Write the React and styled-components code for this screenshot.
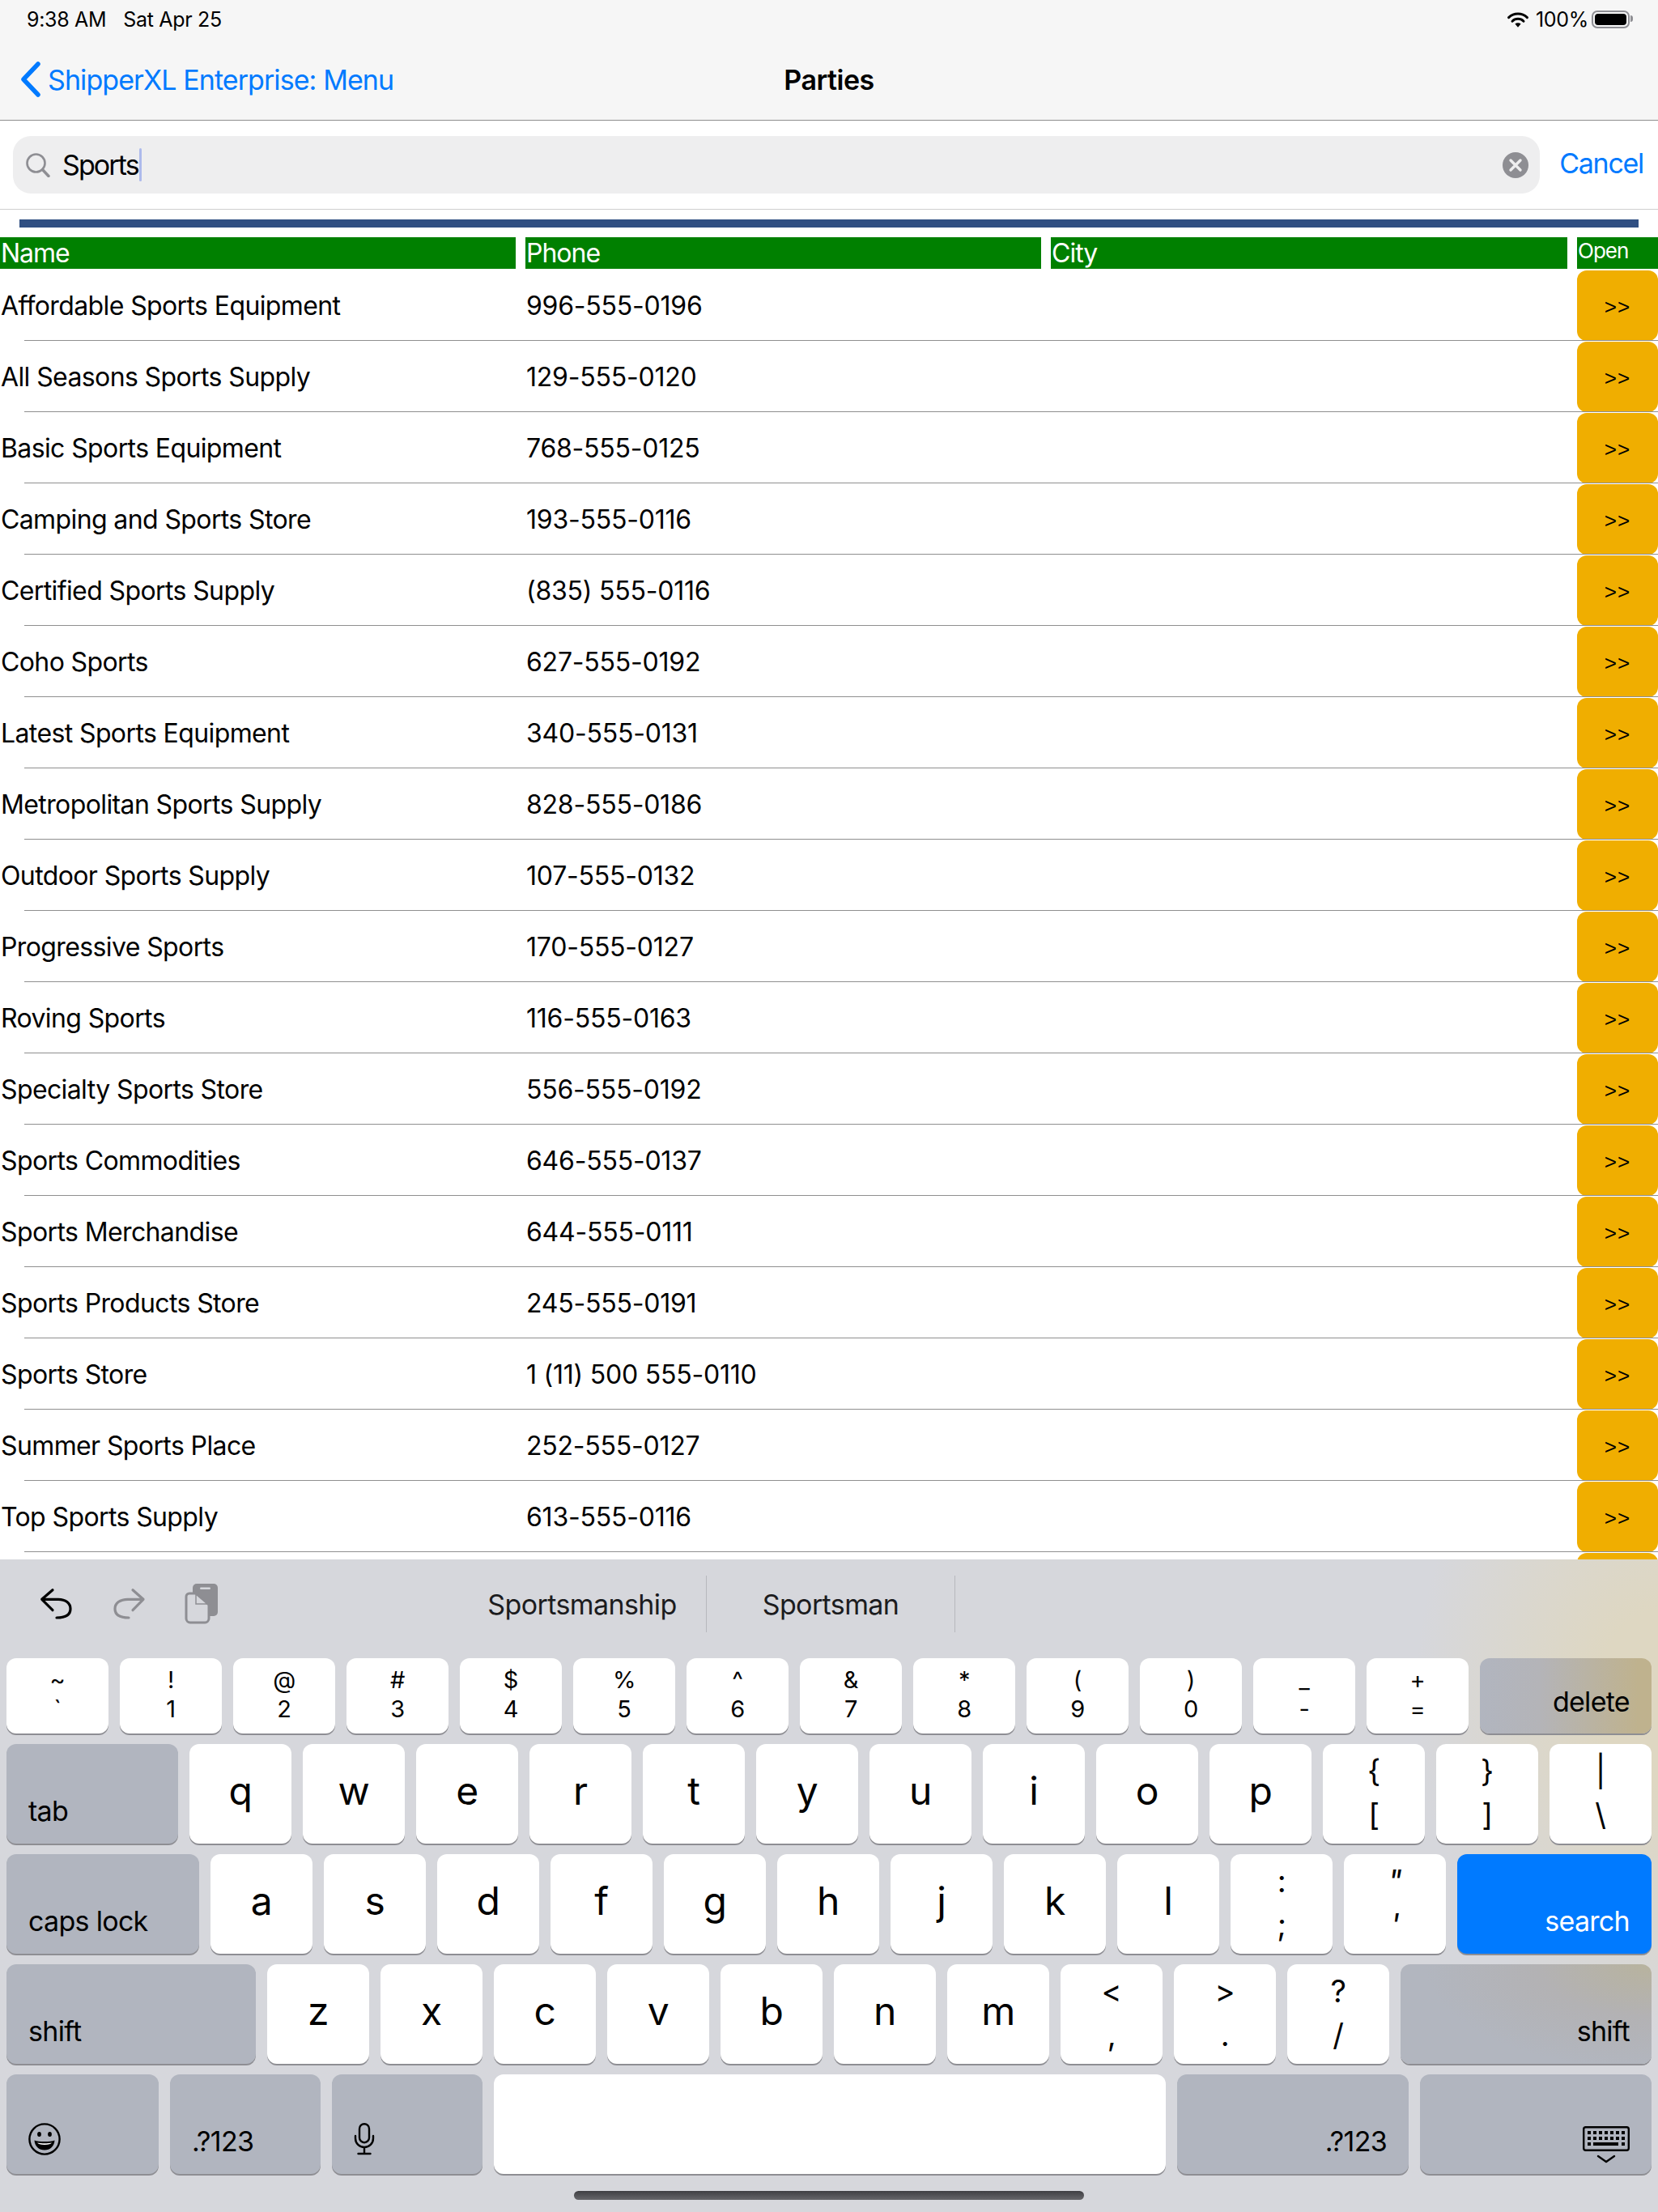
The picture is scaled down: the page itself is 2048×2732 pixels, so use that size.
import styled, { createGlobalStyle } from 'styled-components';

const GlobalStyle = createGlobalStyle`
    html, body {
        margin: 0;
        padding: 0;
        background: #fff;
    }
    body {
        font-family: Inter, Roboto, "Liberation Sans", sans-serif;
        letter-spacing: -0.32px;
        color: #000;
    }
`;

const Screen = styled.div`
    width: 2048px;
    height: 2732px;
    display: flex;
    flex-direction: column;
    overflow: hidden;
`;

// Top bar
const TopBar = styled.header`
    height: 148px;
    flex: none;
    background: #f6f6f6;
    border-bottom: 1px solid #8f8f8f;
    box-sizing: content-box;
`;

const StatusBar = styled.div`
    height: 48px;
    padding: 0 31px 0 33px;
    display: flex;
    align-items: center;
    justify-content: space-between;
    font-size: 25px;
`;

const StatusLeft = styled.div`
    display: flex;
    gap: 21px;
`;

const StatusRight = styled.div`
    display: flex;
    align-items: center;
    gap: 9px;
`;

const Battery = styled.div`
    position: relative;
    width: 47px;
    height: 22px;
    box-sizing: border-box;
    border: 2px solid #8e8e93;
    border-radius: 7px;
    padding: 2px;
    margin-left: -5px;
    margin-right: 4px;
    display: flex;

    &::before {
        content: '';
        flex: 1;
        background: #000;
        border-radius: 4px;
    }

    &::after {
        content: '';
        position: absolute;
        right: -6px;
        top: 4px;
        width: 3px;
        height: 8px;
        border-radius: 0 3px 3px 0;
        background: #8e8e93;
    }
`;

const NavBar = styled.nav`
    height: 100px;
    display: grid;
    grid-template-columns: 1fr auto 1fr;
    align-items: center;
    font-size: 34px;
`;

const BackLink = styled.div`
    display: flex;
    align-items: center;
    gap: 8px;
    padding-left: 25px;
    color: #007aff;
    letter-spacing: -0.92px;
`;

const NavTitle = styled.div`
    font-weight: 600;
    letter-spacing: -0.5px;
`;

// Search
const SearchRow = styled.div`
    height: 110px;
    flex: none;
    box-sizing: border-box;
    border-bottom: 1px solid #cfcfcf;
    padding: 19px 18px 20px 16px;
    display: flex;
    align-items: flex-start;
    gap: 24px;
`;

const SearchField = styled.div`
    flex: 1;
    height: 71px;
    background: #eeeeef;
    border-radius: 22px;
    display: flex;
    align-items: center;
    padding: 0 14px 0 16px;
    gap: 15px;
    font-size: 34px;
`;

const SearchText = styled.span`
    flex: 1;
    display: flex;
    align-items: center;
    letter-spacing: -1.9px;
`;

const Caret = styled.span`
    display: inline-block;
    width: 3px;
    height: 41px;
    margin-left: 1px;
    background: #adbaec;
    border-radius: 2px;
`;

const CancelButton = styled.div`
    color: #007aff;
    font-size: 34px;
    line-height: 68px;
    letter-spacing: -1.3px;
`;

const Divider = styled.div`
    height: 10px;
    flex: none;
    margin: 12px 24px;
    background: #304f82;
`;

// Table
const columns = '637px 637px 638px 100px';

const HeaderRow = styled.div`
    display: grid;
    grid-template-columns: ${columns};
    column-gap: 12px;
    flex: none;
`;

const HeaderCell = styled.div`
    height: 39px;
    background: #008000;
    color: #fff;
    font-size: ${p => (p.$small ? '26px' : '32px')};
    line-height: ${p => (p.$small ? '34px' : '40px')};
    letter-spacing: -1px;
    padding-left: 1px;
    white-space: nowrap;
`;

const RowList = styled.div`
    flex: 1;
    min-height: 0;
    overflow: hidden;
    padding-top: 1px;
`;

const Row = styled.div`
    position: relative;
    height: 88px;
    display: grid;
    grid-template-columns: ${columns};
    column-gap: 12px;
    align-items: center;
    font-size: 32px;

    &::after {
        content: '';
        position: absolute;
        left: 30px;
        right: 0;
        bottom: 0;
        height: 1px;
        background: #8f8f8f;
    }
`;

const NameCell = styled.div`
    padding-left: 1px;
    white-space: nowrap;
    letter-spacing: -0.61px;
`;

const PhoneCell = styled.div`
    padding-left: 1px;
    white-space: nowrap;
    letter-spacing: -0.22px;
`;

const OpenButton = styled.div`
    grid-column: 4;
    height: 87px;
    margin-top: 1px;
    padding-top: 3px;
    box-sizing: border-box;
    background: #f0ae00;
    border-radius: 12px;
    display: flex;
    align-items: center;
    justify-content: center;
    font-family: "Liberation Sans", sans-serif;
    font-size: 26px;
    letter-spacing: 1px;
`;

// Keyboard
const Keyboard = styled.div`
    height: 806px;
    flex: none;
    box-sizing: border-box;
    background:
        radial-gradient(ellipse 300px 420px at 100% 170px, #ded7c2 0%, #ded7c2 25%, rgba(214, 215, 220, 0) 100%),
        #d6d7dc;
    display: flex;
    flex-direction: column;
    padding: 0 8px;
`;

const Suggestions = styled.div`
    height: 122px;
    flex: none;
    display: flex;
    align-items: center;
    padding: 0 0 12px 40px;
    box-sizing: border-box;
`;

const ToolIcons = styled.div`
    display: flex;
    align-items: center;
    gap: 48px;
    width: 518px;
`;

const ToolIcon = styled.svg`
    display: block;
`;

const Suggestion = styled.div`
    width: 306px;
    height: 70px;
    display: flex;
    align-items: center;
    justify-content: center;
    border-right: 1px solid #b7b8bd;
    font-size: 34px;
    letter-spacing: -0.6px;
    color: #1c1c1e;
`;

const KeyRows = styled.div`
    display: flex;
    flex-direction: column;
    gap: 13px;
`;

const KeyRow = styled.div`
    display: flex;
    gap: 14px;
    height: ${p => p.$height}px;
`;

const keyTones = {
    light: 'background: #fff;',
    dark: 'background: #b1b5bf;',
    blue: 'background: #007aff; color: #fff;',
    delete: 'background: linear-gradient(90deg, #b1b5bf 0%, #b4b4b8 35%, #bfb28e 92%);',
    shift: 'background: radial-gradient(ellipse 280px 130px at 100% 0%, #b8b39e 0%, #b3b2b4 50%, #b2b6bf 100%);',
};

const Key = styled.div`
    flex: none;
    width: ${p => p.$w}px;
    box-sizing: border-box;
    border-radius: 12px;
    box-shadow: 0 2px 0 #8e8e93;
    ${p => keyTones[p.$tone || 'light']}
    display: flex;
`;

const LetterKey = styled(Key)`
    align-items: center;
    justify-content: center;
    font-size: 48px;
    padding-bottom: 8px;
`;

const SymbolKey = styled(Key)`
    flex-direction: column;
    align-items: center;
    justify-content: center;
    font-size: ${p => (p.$big ? '38px' : '29px')};
    line-height: ${p => (p.$big ? '54px' : '36px')};
    font-style: ${p => (p.$slanted ? 'italic' : 'normal')};
    padding-bottom: 4px;
`;

const ActionKey = styled(Key)`
    align-items: flex-end;
    justify-content: ${p => (p.$right ? 'flex-end' : 'flex-start')};
    padding: 0 27px ${p => p.$pad ?? 20}px 27px;
    font-size: 34px;
    line-height: 40px;
    letter-spacing: -0.7px;
`;

const BottomIcon = styled.svg`
    display: block;
`;

const ChevronBack = () => (
    <svg width="26" height="44" viewBox="0 0 26 44">
        <path d="M22 3 L4 22 L22 41" fill="none" stroke="#007aff" strokeWidth="5.5" strokeLinecap="round" strokeLinejoin="round" />
    </svg>
);

const Wifi = () => (
    <svg width="26" height="19" viewBox="0 0 26 19">
        <path d="M1.6 6.6 A16.5 16.5 0 0 1 24.4 6.6" fill="none" stroke="#000" strokeWidth="3" strokeLinecap="round" />
        <path d="M6 11.2 A10 10 0 0 1 20 11.2" fill="none" stroke="#000" strokeWidth="3" strokeLinecap="round" />
        <path d="M9.4 14.6 A5.2 5.2 0 0 1 16.6 14.6 L13 18.8 Z" fill="#000" />
    </svg>
);

const SearchIcon = () => (
    <svg width="30" height="30" viewBox="0 0 30 30">
        <circle cx="12.5" cy="12.5" r="11" fill="none" stroke="#8e8e93" strokeWidth="2.6" />
        <path d="M20.5 20.5 L28 28.5" stroke="#8e8e93" strokeWidth="3.4" strokeLinecap="round" />
    </svg>
);

const ClearIcon = () => (
    <svg width="32" height="32" viewBox="0 0 32 32">
        <circle cx="16" cy="16" r="16" fill="#8e8e93" />
        <path d="M10 10 L22 22 M22 10 L10 22" stroke="#eeeeef" strokeWidth="3.4" strokeLinecap="round" />
    </svg>
);

const Undo = () => (
    <ToolIcon width="42" height="42" viewBox="18 18 42 42">
        <path d="M35 21.7 L21.7 33.3 L35 46.7 M22 33.3 H42 C51 33.3 57 38 57 45 C57 52 51 56 40 56" fill="none" stroke="#000" strokeWidth="3.2" strokeLinecap="round" strokeLinejoin="round" />
    </ToolIcon>
);

const Redo = () => (
    <ToolIcon width="42" height="42" viewBox="108 18 42 42">
        <path d="M134 21.7 L147 33.3 L134 46.7 M147 33.3 H128 C118 33.3 112 38 112 45 C112 52 118 56 129 56" fill="none" stroke="#8e8e93" strokeWidth="3.2" strokeLinecap="round" strokeLinejoin="round" />
    </ToolIcon>
);

const Paste = () => (
    <ToolIcon width="42" height="52" viewBox="199 16 42 52">
        <rect x="209" y="17" width="31" height="40" rx="5" fill="#8e8e93" />
        <rect x="218" y="21.5" width="13" height="2.5" rx="1.2" fill="#d6d7dc" />
        <path d="M205 29 H213 L229 43 V60 A5 5 0 0 1 224 65 H206 A5 5 0 0 1 201 60 V33 A4 4 0 0 1 205 29 Z" fill="#d6d7dc" stroke="#8e8e93" strokeWidth="3" strokeLinejoin="round" />
        <path d="M213 30 V42 H227 Z" fill="#d6d7dc" stroke="#8e8e93" strokeWidth="1.5" />
    </ToolIcon>
);

const Smiley = () => (
    <BottomIcon width="40" height="40" viewBox="0 0 40 40">
        <circle cx="20" cy="20" r="18.6" fill="none" stroke="#000" strokeWidth="2.4" />
        <ellipse cx="13.5" cy="14" rx="2.4" ry="3" fill="#000" />
        <ellipse cx="26.5" cy="14" rx="2.4" ry="3" fill="#000" />
        <path d="M7.5 21.5 C13 23.5 27 23.5 32.5 21.5 C32 29 27 33.5 20 33.5 C13 33.5 8 29 7.5 21.5 Z" fill="#000" />
        <path d="M11 24.5 C16 25.5 24 25.5 29 24.5 C28 26 25 27 20 27 C15 27 12 26 11 24.5 Z" fill="#fff" />
    </BottomIcon>
);

const Mic = () => (
    <BottomIcon width="26" height="40" viewBox="0 0 26 40">
        <rect x="7" y="1.2" width="12" height="23" rx="6" fill="none" stroke="#000" strokeWidth="2.4" />
        <path d="M2 16 V19 C2 25.5 7 30 13 30 C19 30 24 25.5 24 19 V16 M13 30 V37.5 M5.5 38 H20.5" fill="none" stroke="#000" strokeWidth="2.4" strokeLinecap="round" />
    </BottomIcon>
);

const keyDots = (y, xs) => xs.map(x => <rect key={`${x}-${y}`} x={x} y={y} width="4" height="4" />);

const KeyboardIcon = () => (
    <BottomIcon width="58" height="46" viewBox="0 0 58 46">
        <rect x="1.2" y="1.2" width="55.6" height="28.6" rx="2.5" fill="none" stroke="#000" strokeWidth="2.4" />
        <g fill="#000">
            {keyDots(6, [6, 13, 20, 27, 34, 41, 48])}
            {keyDots(13, [6, 13, 20, 27, 34, 41, 48])}
            {keyDots(20, [6, 48])}
            <rect x="13" y="20" width="31" height="4" />
        </g>
        <path d="M19 37 L29 44 L39 37" fill="none" stroke="#000" strokeWidth="2.4" strokeLinecap="round" strokeLinejoin="round" />
    </BottomIcon>
);

const HomeBar = styled.div`
    width: 630px;
    height: 11px;
    margin: 21px auto 0;
    border-radius: 6px;
    background: linear-gradient(180deg, #3f3f43, #66666a);
`;

const parties = [
    ['Affordable Sports Equipment', '996-555-0196'],
    ['All Seasons Sports Supply', '129-555-0120'],
    ['Basic Sports Equipment', '768-555-0125'],
    ['Camping and Sports Store', '193-555-0116'],
    ['Certified Sports Supply', '(835) 555-0116'],
    ['Coho Sports', '627-555-0192'],
    ['Latest Sports Equipment', '340-555-0131'],
    ['Metropolitan Sports Supply', '828-555-0186'],
    ['Outdoor Sports Supply', '107-555-0132'],
    ['Progressive Sports', '170-555-0127'],
    ['Roving Sports', '116-555-0163'],
    ['Specialty Sports Store', '556-555-0192'],
    ['Sports Commodities', '646-555-0137'],
    ['Sports Merchandise', '644-555-0111'],
    ['Sports Products Store', '245-555-0191'],
    ['Sports Store', '1 (11) 500 555-0110'],
    ['Summer Sports Place', '252-555-0127'],
    ['Top Sports Supply', '613-555-0116'],
    ['', ''],
];

const numberRow = [['~', '`'], ['!', '1'], ['@', '2'], ['#', '3'], ['$', '4'], ['%', '5'], ['^', '6'], ['&', '7'], ['*', '8'], ['(', '9'], [')', '0'], ['_', '-'], ['+', '=']];

const Letters = ({ chars }) => chars.map(c => <LetterKey key={c} $w={126}>{c}</LetterKey>);

const Symbols = ({ pairs, big }) => pairs.map(([top, bottom]) => (
    <SymbolKey key={top} $w={126} $big={big} $slanted={top === '"'}>
        <span>{top}</span>
        <span>{bottom}</span>
    </SymbolKey>
));

const App = () => (
    <Screen>
        <GlobalStyle />
        <TopBar>
            <StatusBar>
                <StatusLeft>
                    <span>9:38 AM</span>
                    <span>Sat Apr 25</span>
                </StatusLeft>
                <StatusRight>
                    <Wifi />
                    <span>100%</span>
                    <Battery />
                </StatusRight>
            </StatusBar>
            <NavBar>
                <BackLink>
                    <ChevronBack />
                    <span>ShipperXL Enterprise: Menu</span>
                </BackLink>
                <NavTitle>Parties</NavTitle>
            </NavBar>
        </TopBar>

        <SearchRow>
            <SearchField>
                <SearchIcon />
                <SearchText>Sports<Caret /></SearchText>
                <ClearIcon />
            </SearchField>
            <CancelButton>Cancel</CancelButton>
        </SearchRow>

        <Divider />

        <HeaderRow>
            <HeaderCell>Name</HeaderCell>
            <HeaderCell>Phone</HeaderCell>
            <HeaderCell>City</HeaderCell>
            <HeaderCell $small>Open</HeaderCell>
        </HeaderRow>

        <RowList>
            {parties.map(([name, phone], i) => (
                <Row key={i}>
                    <NameCell>{name}</NameCell>
                    <PhoneCell>{phone}</PhoneCell>
                    <OpenButton>{name && '>>'}</OpenButton>
                </Row>
            ))}
        </RowList>

        <Keyboard>
            <Suggestions>
                <ToolIcons>
                    <Undo />
                    <Redo />
                    <Paste />
                </ToolIcons>
                <Suggestion>Sportsmanship</Suggestion>
                <Suggestion>Sportsman</Suggestion>
            </Suggestions>
            <KeyRows>
                <KeyRow $height={93}>
                    <Symbols pairs={numberRow} />
                    <ActionKey $w={212} $tone="delete" $right $pad={19}>delete</ActionKey>
                </KeyRow>
                <KeyRow $height={123}>
                    <ActionKey $w={212} $tone="dark">tab</ActionKey>
                    <Letters chars={['q', 'w', 'e', 'r', 't', 'y', 'u', 'i', 'o', 'p']} />
                    <Symbols big pairs={[['{', '['], ['}', ']'], ['|', '\\']]} />
                </KeyRow>
                <KeyRow $height={123}>
                    <ActionKey $w={238} $tone="dark">caps lock</ActionKey>
                    <Letters chars={['a', 's', 'd', 'f', 'g', 'h', 'j', 'k', 'l']} />
                    <Symbols big pairs={[[':', ';'], ['"', "'"]]} />
                    <ActionKey $w={240} $tone="blue" $right>search</ActionKey>
                </KeyRow>
                <KeyRow $height={123}>
                    <ActionKey $w={308} $tone="dark">shift</ActionKey>
                    <Letters chars={['z', 'x', 'c', 'v', 'b', 'n', 'm']} />
                    <Symbols big pairs={[['<', ','], ['>', '.'], ['?', '/']]} />
                    <ActionKey $w={310} $tone="shift" $right>shift</ActionKey>
                </KeyRow>
                <KeyRow $height={123}>
                    <ActionKey $w={188} $tone="dark" $pad={23}><Smiley /></ActionKey>
                    <ActionKey $w={186} $tone="dark">.?123</ActionKey>
                    <ActionKey $w={186} $tone="dark" $pad={23}><Mic /></ActionKey>
                    <Key $w={830} />
                    <ActionKey $w={286} $tone="dark" $right>.?123</ActionKey>
                    <ActionKey $w={286} $tone="dark" $right $pad={13}><KeyboardIcon /></ActionKey>
                </KeyRow>
            </KeyRows>
            <HomeBar />
        </Keyboard>
    </Screen>
);

export default App;
